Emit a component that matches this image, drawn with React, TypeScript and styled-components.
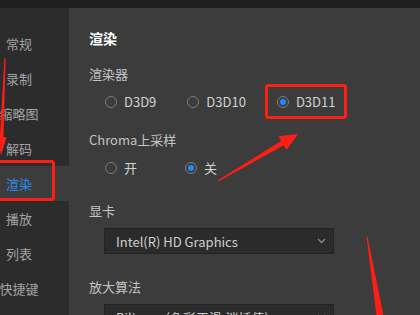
import React from "react";
import styled, { createGlobalStyle } from "styled-components";

const GlobalStyle = createGlobalStyle`
  html, body {
    margin: 0;
    padding: 0;
    background: #3c3c3c;
  }
  * {
    box-sizing: border-box;
  }
`;

const navItems = ["常规", "录制", "缩略图", "解码", "渲染", "播放", "列表", "快捷键"];

interface RadioOption {
  label: string;
  checked?: boolean;
}

const RadioGroup: React.FC<{ options: RadioOption[]; itemWidth?: number }> = ({
  options,
  itemWidth,
}) => (
  <RadioRow>
    {options.map((o) => (
      <RadioItem key={o.label} $width={itemWidth}>
        <Circle $checked={!!o.checked} />
        <RadioText>{o.label}</RadioText>
      </RadioItem>
    ))}
  </RadioRow>
);

const Select: React.FC<{ value: string }> = ({ value }) => (
  <SelectBox>
    <SelectText>{value}</SelectText>
    <svg width="9" height="6" viewBox="0 0 9 6">
      <path d="M1 1 L4.5 4.5 L8 1" fill="none" stroke="#8a8a8a" strokeWidth="1.3" />
    </svg>
  </SelectBox>
);

const App: React.FC = () => {
  return (
    <>
      <GlobalStyle />
      <Window>
        <TopBar />
        <Body>
          <Sidebar>
            {navItems.map((n) => (
              <NavItem key={n} $active={n === "渲染"}>
                <NavLabel>{n}</NavLabel>
              </NavItem>
            ))}
          </Sidebar>
          <Main>
            <Title>渲染</Title>

            <Section>
              <Label>渲染器</Label>
              <RadioGroup
                options={[{ label: "D3D9" }, { label: "D3D10" }, { label: "D3D11", checked: true }]}
              />
            </Section>

            <Section $gap={18}>
              <Label>Chroma上采样</Label>
              <RadioGroup options={[{ label: "开" }, { label: "关", checked: true }]} itemWidth={80} />
            </Section>

            <Section $gap={23}>
              <Label>显卡</Label>
              <Select value="Intel(R) HD Graphics" />
            </Section>

            <Section $gap={23}>
              <Label>放大算法</Label>
              <Select value="Bilinear (色彩平滑,消插值)" />
            </Section>
          </Main>
        </Body>

        <Annotations width="420" height="315" viewBox="0 0 420 315">
          <rect x="266.5" y="85.5" width="79" height="32" rx="2" fill="none" stroke="#ff1e14" strokeWidth="3" />
          <rect x="-4" y="161.5" width="57.5" height="38" rx="2" fill="none" stroke="#ff1e14" strokeWidth="3" />
          <polygon
            fill="#ff1e14"
            points="217.6,180.4 281.2,140.9 278.5,136.2 298,134 286.5,150 283.8,145.3 218.4,181.6"
          />
          <polygon
            fill="#ff1e14"
            points="4.4,58 -0.1,136.9 -3.3,136.8 1,155 6.7,137.2 3.5,137.1 5.6,58"
          />
          <polygon fill="#ff1e14" points="366.5,236.5 367.5,236.5 383.5,316 376.5,316" />
        </Annotations>
      </Window>
    </>
  );
};

export default App;

const Window = styled.div`
  position: relative;
  width: 420px;
  height: 315px;
  overflow: hidden;
  display: flex;
  flex-direction: column;
  background: #3c3c3c;
  font-family: "Noto Sans CJK SC", "Noto Sans", sans-serif;
  font-size: 13px;
`;

const TopBar = styled.div`
  height: 8px;
  flex: none;
  background: #1f1f1f;
`;

const Body = styled.div`
  flex: 1;
  display: flex;
  min-height: 0;
`;

const Sidebar = styled.div`
  width: 69px;
  flex: none;
  background: #2c2c2c;
  padding-top: 18px;
  display: flex;
  flex-direction: column;
`;

const NavItem = styled.div<{ $active: boolean }>`
  height: 35px;
  display: flex;
  align-items: center;
  background: ${(p) => (p.$active ? "#3c3c3c" : "transparent")};
  color: ${(p) => (p.$active ? "#2b8cf0" : "#a3a3a3")};
`;

const NavLabel = styled.span`
  width: 38px;
  text-align: center;
  white-space: nowrap;
  display: flex;
  justify-content: center;
  line-height: 20px;
`;

const Main = styled.div`
  flex: 1;
  padding: 20px 0 0 20px;
  display: flex;
  flex-direction: column;
`;

const Title = styled.div`
  color: #ffffff;
  font-weight: bold;
  font-size: 14px;
  line-height: 20px;
`;

const Section = styled.div<{ $gap?: number }>`
  margin-top: ${(p) => p.$gap ?? 16}px;
  display: flex;
  flex-direction: column;
  gap: 7px;
`;

const Label = styled.div`
  color: #c4c4c4;
  line-height: 20px;
`;

const RadioRow = styled.div`
  display: flex;
  align-items: center;
  padding-left: 16px;
  height: 21px;
`;

const RadioItem = styled.div<{ $width?: number }>`
  display: flex;
  align-items: center;
  gap: 7px;
  ${(p) => (p.$width ? `width: ${p.$width}px;` : "margin-right: 31px;")}
`;

const Circle = styled.span<{ $checked: boolean }>`
  width: 12px;
  height: 12px;
  border-radius: 50%;
  border: 1px solid #7c7c7c;
  display: flex;
  align-items: center;
  justify-content: center;

  &::after {
    content: "";
    display: ${(p) => (p.$checked ? "block" : "none")};
    width: 6px;
    height: 6px;
    border-radius: 50%;
    background: #1e8cff;
  }
`;

const RadioText = styled.span`
  color: #d2d2d2;
  line-height: 20px;
`;

const SelectBox = styled.div`
  margin-left: 15px;
  width: 230px;
  height: 26px;
  flex: none;
  background: #2b2b2b;
  border: 1px solid #232323;
  display: flex;
  align-items: center;
  justify-content: space-between;
  padding: 0 7px 0 11px;
`;

const SelectText = styled.span`
  color: #cfcfcf;
  white-space: nowrap;
`;

const Annotations = styled.svg`
  position: absolute;
  left: 0;
  top: 0;
  pointer-events: none;
`;
